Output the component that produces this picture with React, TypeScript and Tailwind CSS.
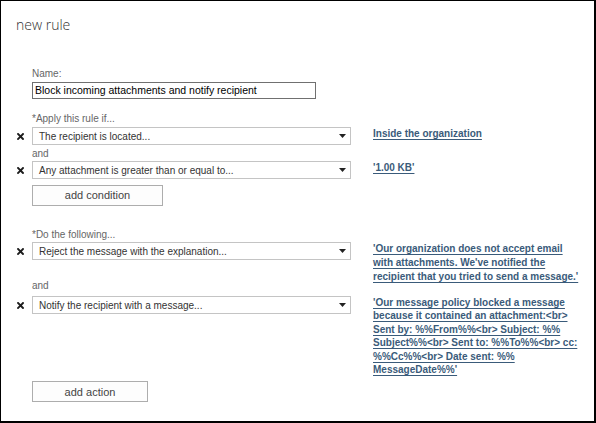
import React from 'react';

const XMark = () => (
  <svg width="7" height="7" viewBox="0 0 7 7" className="block">
    <path d="M1 1L6 6M6 1L1 6" stroke="#1c1c1c" strokeWidth="1.9" strokeLinecap="square" />
  </svg>
);

const Arrow = () => (
  <svg width="7" height="4" viewBox="0 0 7 4" className="block">
    <path d="M0 0H7L3.5 4Z" fill="#222" />
  </svg>
);

interface SelectRowProps {
  text: string;
  link: string;
  linkClass?: string;
}

const SelectRow: React.FC<SelectRowProps> = ({ text, link, linkClass = '' }) => (
  <div className="flex items-start">
    <div className="w-[31px] h-[18px] flex items-center pl-[16px]">
      <XMark />
    </div>
    <div className="w-[319px] h-[18px] border border-[#c4c4c4] bg-white flex items-center justify-between pl-[6px] pr-[4px] text-[10px] text-[#333]">
      <span>{text}</span>
      <Arrow />
    </div>
    <a
      href="#"
      className={`ml-[22px] w-[215px] whitespace-pre-line font-bold text-[10px] text-[#3a5b7a] underline underline-offset-[2px] ${linkClass}`}
    >
      {link}
    </a>
  </div>
);

const Label: React.FC<{ children: React.ReactNode; className?: string }> = ({ children, className = '' }) => (
  <div className={`pl-[31px] text-[10px] leading-[12px] text-[#666] ${className}`}>{children}</div>
);

const Button: React.FC<{ children: React.ReactNode; className?: string }> = ({ children, className = '' }) => (
  <div className={`ml-[31px] h-[21px] border border-[#adadad] bg-[#fdfdfd] flex items-center justify-center text-[11px] text-[#444] ${className}`}>
    {children}
  </div>
);

export default function App() {
  return (
    <div className="w-[596px] h-[423px] bg-white border-t border-l border-r-2 border-b-2 border-black font-['Liberation_Sans',Arial,sans-serif] overflow-hidden">
      <h1 className="pl-[15px] pt-[14px] font-['Open_Sans',sans-serif] font-light text-[14px] leading-[20px] text-[#333]">
        new rule
      </h1>

      <div className="mt-[33px] flex flex-col">
        <Label>Name:</Label>
        <div className="ml-[31px] mt-[2px] w-[284px] h-[17px] border border-[#707070] flex items-center pl-[2px] text-[10.5px] text-black">
          Block incoming attachments and notify recipient
        </div>

        <Label className="mt-[14px]">*Apply this rule if...</Label>
        <div className="mt-[2px]">
          <SelectRow text="The recipient is located..." link="Inside the organization" linkClass="leading-[14px]" />
        </div>
        <Label className="mt-[3px]">and</Label>
        <div className="mt-[1px]">
          <SelectRow text="Any attachment is greater than or equal to..." link="'1.00 KB'" linkClass="leading-[14px]" />
        </div>
        <Button className="mt-[6px] w-[131px]">add condition</Button>

        <Label className="mt-[23px]">*Do the following...</Label>
        <div className="mt-[1px]">
          <SelectRow
            text="Reject the message with the explanation..."
            link={"'Our organization does not accept email\nwith attachments. We've notified the\nrecipient that you tried to send a message.'"}
            linkClass="leading-[14px]"
          />
        </div>
        <Label className="mt-[-4px]">and</Label>
        <div className="mt-[4px]">
          <SelectRow
            text="Notify the recipient with a message..."
            link={"'Our message policy blocked a message\nbecause it contained an attachment:<br>\nSent by: %%From%%<br> Subject: %%\nSubject%%<br> Sent to: %%To%%<br> cc:\n%%Cc%%<br> Date sent: %%\nMessageDate%%'"}
            linkClass="leading-[13.4px]"
          />
        </div>
        <Button className="mt-[5px] w-[116px]">add action</Button>
      </div>
    </div>
  );
}
